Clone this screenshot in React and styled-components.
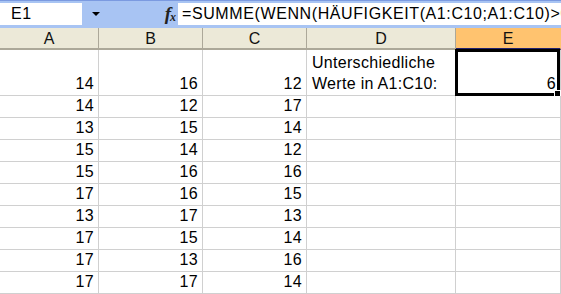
import React from 'react';
import styled, { createGlobalStyle } from 'styled-components';

const GlobalStyle = createGlobalStyle`
  html, body {
    margin: 0;
    padding: 0;
    background: #fff;
    overflow: hidden;
  }
  body {
    font-family: "Liberation Sans", Arial, sans-serif;
  }
`;

const rows = [
  [14, 16, 12],
  [14, 12, 17],
  [13, 15, 14],
  [15, 14, 12],
  [15, 16, 16],
  [17, 16, 15],
  [13, 17, 13],
  [17, 15, 14],
  [17, 13, 16],
  [17, 17, 14],
];

const columns = ['A', 'B', 'C', 'D', 'E'];

const Sheet = styled.div`
  width: 561px;
  height: 294px;
  overflow: hidden;
  display: flex;
  flex-direction: column;
`;

const FormulaBar = styled.div`
  height: 28px;
  box-sizing: border-box;
  border-top: 1px solid #7b9ae0;
  background: #a8c4f3;
  display: flex;
  align-items: center;
  padding: 1px 0 2px;
  flex-shrink: 0;
`;

const NameBox = styled.div`
  width: 82px;
  height: 22px;
  background: #fff;
  font-size: 16px;
  line-height: 22px;
  padding-left: 11px;
  box-sizing: border-box;
  color: #000;
  letter-spacing: 0.5px;
`;

const Dropdown = styled.div`
  width: 28px;
  display: flex;
  justify-content: center;
  align-items: center;
`;

const Arrow = styled.div`
  width: 0;
  height: 0;
  border-left: 4px solid transparent;
  border-right: 4px solid transparent;
  border-top: 4px solid #000;
`;

const Fx = styled.span`
  font-family: "Liberation Serif", "Times New Roman", serif;
  font-style: italic;
  font-weight: bold;
  font-size: 19px;
  color: #222;
  width: 68px;
  text-align: right;
  padding-right: 3px;
  box-sizing: border-box;
  letter-spacing: -1px;

  sub {
    font-size: 12px;
    vertical-align: -1px;
  }
`;

const FormulaInput = styled.div`
  flex: 1;
  height: 22px;
  background: #fff;
  font-size: 16px;
  line-height: 22px;
  padding-left: 4px;
  white-space: nowrap;
  overflow: hidden;
  color: #000;
  letter-spacing: 0.6px;
`;

const Grid = styled.div`
  display: grid;
  grid-template-columns: 99px 104px 104px 149px 105px;
  grid-template-rows: 22px 46px repeat(9, 22px);
  font-size: 16px;
  color: #000;
`;

const Header = styled.div`
  box-sizing: border-box;
  background: ${(p) => (p.active ? '#ffc36f' : '#ece9d8')};
  border-right: 1px solid ${(p) => (p.active ? '#ffc36f' : '#aca899')};
  border-bottom: 2px solid ${(p) => (p.active ? '#22226e' : '#aca899')};
  display: flex;
  align-items: center;
  justify-content: center;
  font-size: 16px;
  padding-top: 1px;
  color: #111;
`;

const Cell = styled.div`
  position: relative;
  box-sizing: border-box;
  border-right: 1px solid #d0d0d0;
  border-bottom: 1px solid #d0d0d0;
  display: flex;
  align-items: flex-end;
  justify-content: ${(p) => (p.text ? 'flex-start' : 'flex-end')};
  padding: 0 ${(p) => (p.text ? '0' : '4px')} 1px ${(p) => (p.text ? '5px' : '0')};
  line-height: 20px;
  white-space: ${(p) => (p.text ? 'normal' : 'nowrap')};
  letter-spacing: 0.3px;
`;

const Selection = styled.div`
  position: absolute;
  left: -1px;
  top: -1px;
  right: 0;
  bottom: -1px;
  border: 3px solid #000;
  pointer-events: none;

  &::after {
    content: '';
    position: absolute;
    right: -4px;
    bottom: -4px;
    width: 5px;
    height: 5px;
    background: #000;
    border: 1px solid #fff;
  }
`;

const Label = styled.span`
  display: block;
  width: 135px;
  line-height: 21px;
  letter-spacing: 0.3px;
`;

export default function App() {
  return (
    <>
      <GlobalStyle />
      <Sheet>
        <FormulaBar>
          <NameBox>E1</NameBox>
          <Dropdown>
            <Arrow />
          </Dropdown>
          <Fx>
            f<sub>x</sub>
          </Fx>
          <FormulaInput>=SUMME(WENN(HÄUFIGKEIT(A1:C10;A1:C10)&gt;0;1))</FormulaInput>
        </FormulaBar>
        <Grid>
          {columns.map((c) => (
            <Header key={c} active={c === 'E'}>
              {c}
            </Header>
          ))}
          {rows.map((row, i) => (
            <React.Fragment key={i}>
              {row.map((v, j) => (
                <Cell key={j}>{v}</Cell>
              ))}
              <Cell text={i === 0 ? 1 : 0}>
                {i === 0 && <Label>Unterschiedliche Werte in A1:C10:</Label>}
              </Cell>
              <Cell>
                {i === 0 && '6'}
                {i === 0 && <Selection />}
              </Cell>
            </React.Fragment>
          ))}
        </Grid>
      </Sheet>
    </>
  );
}
